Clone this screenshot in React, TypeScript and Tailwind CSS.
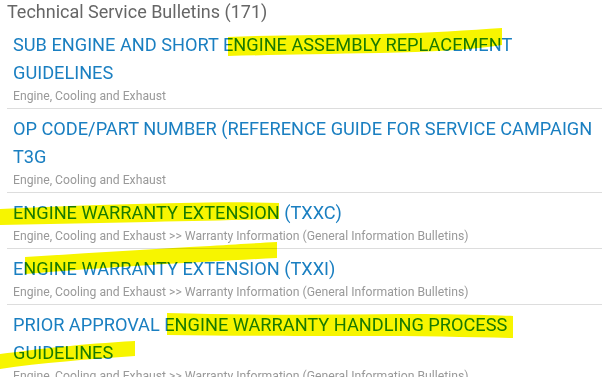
const bulletins = [
  {
    title: "SUB ENGINE AND SHORT ENGINE ASSEMBLY REPLACEMENT GUIDELINES",
    path: "Engine, Cooling and Exhaust",
  },
  {
    title: "OP CODE/PART NUMBER (REFERENCE GUIDE FOR SERVICE CAMPAIGN T3G",
    path: "Engine, Cooling and Exhaust",
  },
  {
    title: "ENGINE WARRANTY EXTENSION (TXXC)",
    path: "Engine, Cooling and Exhaust >> Warranty Information (General Information Bulletins)",
  },
  {
    title: "ENGINE WARRANTY EXTENSION (TXXI)",
    path: "Engine, Cooling and Exhaust >> Warranty Information (General Information Bulletins)",
  },
  {
    title: "PRIOR APPROVAL ENGINE WARRANTY HANDLING PROCESS GUIDELINES",
    path: "Engine, Cooling and Exhaust >> Warranty Information (General Information Bulletins)",
  },
];

// freehand highlighter strokes drawn over the list
const strokes = [
  "M228 37 C270 35 330 35 380 34 C430 33 470 30 502 28 L502 45 C470 50 430 52 380 53 C320 54 270 55 228 56 Z",
  "M0 209 C60 206 120 204 180 203 C220 202 250 202 279 203 L279 219 C240 220 200 221 150 222 C100 223 50 224 0 225 Z",
  "M25 257 C90 253 150 249 210 246 C240 244 260 243 277 242 L277 258 C240 260 200 262 150 265 C100 268 60 271 25 274 Z",
  "M167 313 C240 315 320 315 400 314 C450 314 490 315 513 316 L513 338 C470 337 420 336 360 336 C300 336 230 336 167 335 Z",
  "M0 354 C40 349 80 344 135 341 L135 356 C90 359 40 363 0 369 Z",
];

export default function App() {
  return (
    <div className="relative w-[602px] h-[377px] overflow-hidden bg-white font-['Roboto',sans-serif]">
      <div className="pl-[7px]">
        <h2 className="text-[18px] leading-[20px] text-[#666] pt-[2px] pb-[3px]">
          Technical Service Bulletins (171)
        </h2>
        {bulletins.map((b, i) => (
          <div
            key={i}
            className={
              "pl-[6px] pt-[6px] pb-[4px] border-[#ddd] " +
              (i > 0 ? "border-t" : "")
            }
          >
            <a className="block text-[18.2px] leading-[28px] text-[#1a7fc1]">
              {b.title}
            </a>
            <p className="text-[12.2px] leading-[16px] text-[#999] mt-[1px]">
              {b.path}
            </p>
          </div>
        ))}
      </div>
      <svg
        className="absolute inset-0 pointer-events-none mix-blend-multiply"
        width="602"
        height="377"
        viewBox="0 0 602 377"
      >
        {strokes.map((d, i) => (
          <path key={i} d={d} fill="#f7f500" />
        ))}
      </svg>
    </div>
  );
}
